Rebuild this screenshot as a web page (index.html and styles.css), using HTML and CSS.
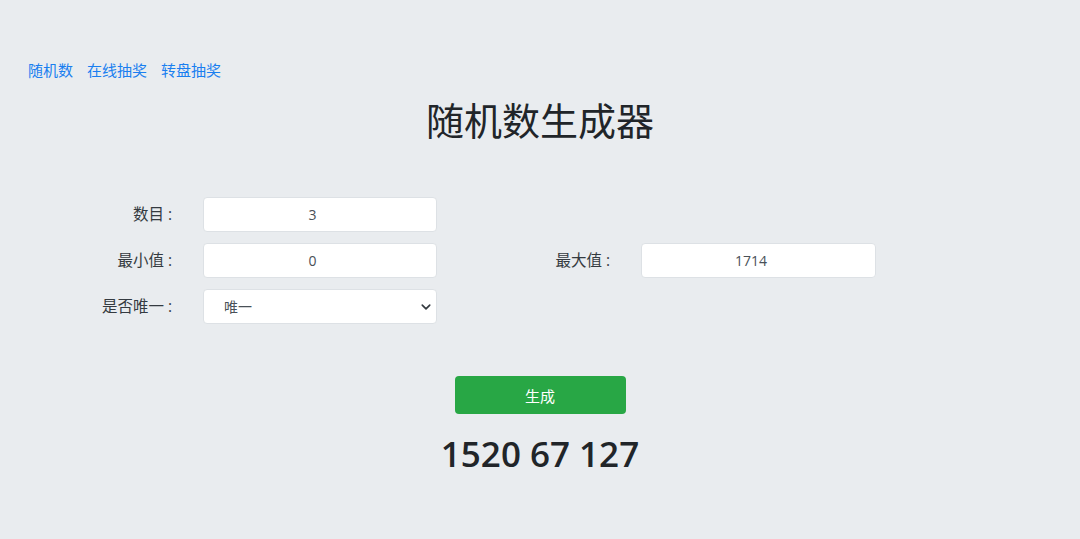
FILE: index.html
```html
<!DOCTYPE html>
<html lang="zh-CN">
<head>
    <meta charset="UTF-8">
    <meta name="viewport" content="width=device-width, initial-scale=1.0">
    <title>随机数生成器</title>
    <link rel="stylesheet" href="styles.css">
</head>
<body>
    <nav class="nav">
        <a href="#">随机数</a>
        <a href="#">在线抽奖</a>
        <a href="#">转盘抽奖</a>
    </nav>

    <h1 class="title">随机数生成器</h1>

    <form class="form" id="rand-form">
        <label for="count">数目<span class="colon">:</span></label>
        <input type="number" id="count" value="3">
        <span></span>
        <span></span>

        <label for="min">最小值<span class="colon">:</span></label>
        <input type="number" id="min" value="0">
        <label for="max">最大值<span class="colon">:</span></label>
        <input type="number" id="max" value="1714">

        <label for="unique">是否唯一<span class="colon">:</span></label>
        <div class="select-wrap">
            <select id="unique">
                <option>唯一</option>
                <option>不唯一</option>
            </select>
            <svg class="caret" width="10" height="10" viewBox="0 0 16 16"><path d="M2 5l6 6 6-6" fill="none" stroke="#343a40" stroke-width="2.6" stroke-linecap="round" stroke-linejoin="round"/></svg>
        </div>
    </form>

    <div class="actions">
        <button type="button" class="btn" onclick="generate()">生成</button>
    </div>
    <div class="result" id="result">1520 67 127</div>

    <script>
      function generate() {
          const count = parseInt(document.getElementById('count').value);
          const min = parseInt(document.getElementById('min').value);
          const max = parseInt(document.getElementById('max').value);
          const unique = document.getElementById('unique').selectedIndex === 0;

          if (isNaN(count) || isNaN(min) || isNaN(max) || max < min) {
              alert('请输入有效的数值');
              return;
          }

          const nums = [];
          while (nums.length < count) {
              const n = min + Math.floor(Math.random() * (max - min + 1));
              if (unique && nums.includes(n)) {
                  if (nums.length >= max - min + 1) break;
                  continue;
              }
              nums.push(n);
          }
          document.getElementById('result').textContent = nums.join(' ');
      }
    </script>
</body>
</html>
```

FILE: styles.css
```css
body {
    font-family: "Open Sans", "Noto Sans CJK SC", sans-serif;
    background-color: #e9ecef;
    color: #212529;
    margin: 0;
    padding: 0;
}
.nav {
    display: flex;
    gap: 14px;
    padding: 59px 0 0 28px;
    font-size: 15px;
    line-height: 22px;
}
.nav a {
    color: #1a7ff0;
    text-decoration: none;
}
.title {
    text-align: center;
    font-weight: 400;
    font-size: 38px;
    line-height: 48px;
    margin: 15px 0 0;
    color: #212529;
}
.form {
    display: grid;
    grid-template-columns: 203px 234px 204px 235px;
    row-gap: 11px;
    margin-top: 53px;
}
.form label {
    text-align: right;
    padding-right: 31px;
    font-size: 15.5px;
    line-height: 35px;
    color: #343a40;
}
.colon {
    margin-left: 4px;
}
.form input,
.form select {
    box-sizing: border-box;
    width: 100%;
    height: 35px;
    border: 1px solid #dde1e5;
    border-radius: 4px;
    background: #fff;
    font-family: inherit;
    font-size: 14px;
    color: #495057;
    text-align: center;
    padding: 0 15px 0 0;
    -moz-appearance: textfield;
}
.form input::-webkit-inner-spin-button,
.form input::-webkit-outer-spin-button {
    -webkit-appearance: none;
    margin: 0;
}
.select-wrap {
    position: relative;
}
.form select {
    appearance: none;
    -webkit-appearance: none;
    text-align: left;
    padding-left: 20px;
}
.caret {
    position: absolute;
    right: 6px;
    top: 13px;
    pointer-events: none;
}
.actions {
    display: flex;
    justify-content: center;
    margin-top: 52px;
}
.btn {
    width: 171px;
    height: 38px;
    border: none;
    border-radius: 4px;
    background-color: #28a745;
    color: #fff;
    font-family: inherit;
    font-size: 15px;
    cursor: pointer;
}
.result {
    text-align: center;
    font-size: 35px;
    font-weight: 600;
    line-height: 48px;
    margin-top: 16px;
    color: #212529;
}
```
